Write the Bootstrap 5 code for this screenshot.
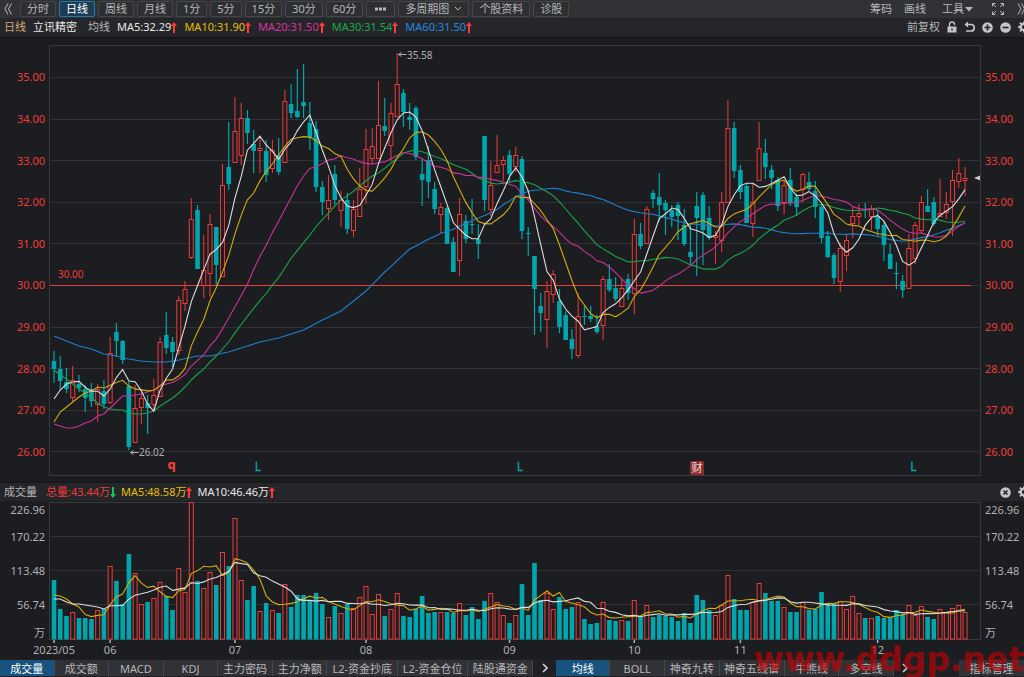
<!DOCTYPE html>
<html lang="zh-CN" data-bs-theme="dark">
<head>
<meta charset="utf-8">
<meta name="viewport" content="width=device-width, initial-scale=1">
<title>立讯精密 日线</title>
<link href="https://cdn.jsdelivr.net/npm/bootstrap@5.3.0/dist/css/bootstrap.min.css" rel="stylesheet">
<style>
  :root { --up:#ee3b39; --down:#00a6ad; --txt:#b6b7ba; --panel:#1c1d20; --bar:#252629; --tool:#313236; }
  body { font-family:"Noto Sans","Noto Sans CJK SC",sans-serif; font-size:11px; line-height:16px; color:var(--txt); background:var(--panel); }
  button, select { font:inherit; color:inherit; }
  .toolbar { background:var(--tool); height:18px; }
  .infobar { background:var(--bar); height:19px; border-bottom:1px solid #202124; }
  .edge { height:2px; background:#18171b; }
  .volbar { background:var(--bar); height:20px; border-top:2px solid #18171b; }
  .tool { height:16px; padding:0 6px; line-height:14px; font-size:11px; color:var(--txt); border:1px solid #45464a; border-radius:2px; background:#2e2f33; }
  .tool.active { background:#1d3d55; border-color:#2277b0; color:#fff; }
  .tool.dots { padding:0 7px; }
  select.tool { width:71px; appearance:none; background:#2e2f33 url("data:image/svg+xml,%3Csvg xmlns='http://www.w3.org/2000/svg' width='8' height='6'%3E%3Cpath d='M1 1l3 3 3-3' fill='none' stroke='%23b6b7ba'/%3E%3C/svg%3E") no-repeat right 6px center; }
  .plain { border:0; background:none; padding:0; line-height:16px; display:flex; align-items:center; }
  .tools { gap:3px; }
  .quotes { gap:7px; }
  .volquotes { gap:5px; }
  .c-day { color:#d9a871; } .c-ma10 { color:#e6bd00; } .c-ma20 { color:#d6309c; } .c-ma30 { color:#15ad4b; } .c-ma60 { color:#1f8be0; } .c-up { color:var(--up); } .c-white { color:#e8e8e8; }
  .plot { flex-basis:0; min-height:0; }
  .plot svg { width:100%; height:100%; display:block; }
  .plot-k { flex-grow:442; } .plot-v { flex-grow:158; }
  .tabs { height:18px; padding:1px 0; background:#1f2023; }
  .tabs button { flex:0 0 5.33%; border:0; border-right:1px solid #46474b; padding:0; background:var(--tool); white-space:nowrap; line-height:15px; }
  .tabs .w-long { flex-basis:6.88%; } .tabs .w-mid { flex-basis:6.35%; }
  .tabs .on { background:#18527f; color:#fff; }
  .tabs .more { flex-basis:2.2%; background:none; border:0; display:flex; align-items:center; justify-content:center; }
  .watermark { right:0; bottom:0; font:bold 33px/34px "DejaVu Sans",sans-serif; color:rgba(200,0,4,.63); pointer-events:none; }
</style>
</head>
<body class="d-flex flex-column vh-100 overflow-hidden position-relative">
<svg class="d-none" aria-hidden="true">
  <symbol id="up" viewBox="0 0 6 11"><path d="M3 0L6 4H4V11H2V4H0z" fill="#ff3a38"/></symbol>
  <symbol id="dn" viewBox="0 0 6 11"><path d="M3 11L6 7H4V0H2V7H0z" fill="#14c455"/></symbol>
  <symbol id="gear" viewBox="0 0 6 12"><path d="M5 .5h2v2H5zM.2 4.800h2v2.400h-2zM1.300 2.300l1.300-1.300 1.600 1.600-1.300 1.300zM1.300 9.700L2.600 11l1.600-1.600-1.300-1.300zM5 9.500h2v2H5z" fill="#c4c5c8"/><circle cx="6" cy="6" r="3.200" fill="none" stroke="#c4c5c8" stroke-width="2.200"/></symbol>
  <symbol id="next" viewBox="0 0 6 10"><path d="M1 1l4 4-4 4" fill="none" stroke="#d0d1d3" stroke-width="1.600"/></symbol>
</svg>

<header class="toolbar d-flex align-items-center">
  <button class="plain ms-1 me-2" aria-label="收起"><svg width="8" height="12" viewBox="0 0 8 12"><path d="M4 .5L1 6l3 5.500M7.500 .5L4.500 6l3 5.500" fill="none" stroke="#b6b7ba"/></svg></button>
  <nav class="tools d-flex" aria-label="周期">
    <button class="tool">分时</button><button class="tool active">日线</button><button class="tool">周线</button><button class="tool">月线</button><button class="tool">1分</button><button class="tool">5分</button><button class="tool">15分</button><button class="tool">30分</button><button class="tool">60分</button>
    <button class="tool dots d-flex align-items-center" aria-label="更多"><svg width="13" height="4"><path d="M1 .5h3v3H1zM5 .5h3v3H5zM9 .5h3v3H9z" fill="#b6b7ba"/></svg></button>
    <select class="tool" aria-label="多周期图"><option>多周期图</option></select>
    <button class="tool">个股资料</button><button class="tool">诊股</button>
  </nav>
  <div class="d-flex align-items-center ms-auto">
    <button class="plain me-2 pe-1">筹码</button><button class="plain me-3">画线</button>
    <button class="plain me-3">工具<svg width="11" height="5"><path d="M1 0h8L5 4.500z" fill="#b6b7ba"/></svg></button>
    <button class="plain" aria-label="全屏"><svg width="14" height="14" viewBox="0 0 14 14" fill="none" stroke="#b6b7ba"><path d="M1.500 4.500v-3h3M1.500 1.500l3.500 3.500M9.500 1.500h3v3M12.500 1.500L9 5M1.500 9.500v3h3M1.500 12.500L5 9M12.500 9.500v3h-3M12.500 12.500L9 9"/></svg></button>
    <button class="plain ms-2 ps-1" aria-label="展开"><svg width="7" height="12" viewBox="0 0 7 12"><path d="M1 .5L4 6l-3 5.500M4.500 .5L7.500 6l-3 5.500" fill="none" stroke="#b6b7ba"/></svg></button>
  </div>
</header>

<div class="infobar d-flex align-items-center">
  <div class="quotes d-flex ps-1">
    <span class="c-day">日线</span><span class="c-white">立讯精密</span><span class="ms-1">均线</span>
    <span class="c-white d-flex align-items-center">MA5:32.29<svg width="6" height="11"><use href="#up"/></svg></span>
    <span class="c-ma10 d-flex align-items-center">MA10:31.90<svg width="6" height="11"><use href="#up"/></svg></span>
    <span class="c-ma20 d-flex align-items-center">MA20:31.50<svg width="6" height="11"><use href="#up"/></svg></span>
    <span class="c-ma30 d-flex align-items-center">MA30:31.54<svg width="6" height="11"><use href="#up"/></svg></span>
    <span class="c-ma60 d-flex align-items-center">MA60:31.50<svg width="6" height="11"><use href="#up"/></svg></span>
  </div>
  <div class="quotes d-flex align-items-center ms-auto">
    <button class="plain">前复权</button>
    <button class="plain" aria-label="锁定"><svg width="10" height="12" viewBox="0 0 10 12"><path d="M2.500 6V3.500a2.500 2.500 0 0 1 5 0V4" fill="none" stroke="#c4c5c8" stroke-width="1.300"/><path d="M.5 5.500h9v6h-9zM4.300 7.500v2h1.400v-2z" fill="#c4c5c8" fill-rule="evenodd"/></svg></button>
    <button class="plain" aria-label="撤销"><svg width="11" height="12" viewBox="0 0 11 12"><path d="M2 3.500h5a3 3 0 0 1 0 6.500H2" fill="none" stroke="#c4c5c8" stroke-width="1.700"/><path d="M4 .5v6L.5 3.500z" fill="#c4c5c8"/></svg></button>
    <button class="plain" aria-label="放大"><svg width="11" height="11" viewBox="0 0 11 11"><circle cx="5.500" cy="5.500" r="5.300" fill="#c4c5c8"/><path d="M5.500 2.500v6M2.500 5.500h6" stroke="#252629" stroke-width="1.700"/></svg></button>
    <button class="plain" aria-label="缩小"><svg width="11" height="11" viewBox="0 0 11 11"><circle cx="5.500" cy="5.500" r="5.300" fill="#c4c5c8"/><path d="M2.500 5.500h6" stroke="#252629" stroke-width="1.700"/></svg></button>
    <button class="plain" aria-label="设置"><svg width="6" height="12"><use href="#gear"/></svg></button>
  </div>
</div>
<div class="edge"></div>

<main class="plot plot-k"><svg id="kline" role="img" aria-label="K线图"></svg></main>

<div class="volbar d-flex align-items-center">
  <div class="volquotes d-flex ps-1">
    <span class="me-1">成交量</span>
    <span class="c-up d-flex align-items-center">总量:43.44万<svg width="6" height="11"><use href="#dn"/></svg></span>
    <span class="c-ma10 d-flex align-items-center">MA5:48.58万<svg width="6" height="11"><use href="#up"/></svg></span>
    <span class="c-white d-flex align-items-center">MA10:46.46万<svg width="6" height="11"><use href="#up"/></svg></span>
  </div>
  <div class="quotes d-flex align-items-center ms-auto">
    <button class="plain" aria-label="关闭"><svg width="11" height="11" viewBox="0 0 11 11"><circle cx="5.500" cy="5.500" r="5.300" fill="#c4c5c8"/><path d="M3.500 3.500l4 4M7.500 3.500l-4 4" stroke="#252629" stroke-width="1.600"/></svg></button>
    <button class="plain" aria-label="设置"><svg width="6" height="12"><use href="#gear"/></svg></button>
  </div>
</div>
<section class="plot plot-v"><svg id="volume" role="img" aria-label="成交量图"></svg></section>

<footer class="tabs d-flex">
  <button class="on">成交量</button><button>成交额</button><button>MACD</button><button>KDJ</button><button>主力密码</button><button>主力净额</button><button class="w-long">L2-资金抄底</button><button class="w-long">L2-资金仓位</button><button class="w-mid">陆股通资金</button>
  <button class="more" aria-label="更多副图"><svg width="6" height="10"><use href="#next"/></svg></button>
  <button class="on">均线</button><button>BOLL</button><button>神奇九转</button><button class="w-mid">神奇五线谱</button><button>牛熊线</button><button>多空线</button>
  <button class="more" aria-label="更多主图"><svg width="6" height="10"><use href="#next"/></svg></button>
  <button class="w-mid ms-auto border-0">指标管理</button>
</footer>
<div class="watermark position-absolute">www.ddgp.net</div>

<script src="https://cdn.jsdelivr.net/npm/bootstrap@5.3.0/dist/js/bootstrap.bundle.min.js"></script>
<script>
// Each day: high, body top, body bottom, low on the panel scale (77.4 = 35.00, 41.6 per yuan); r = rise, t = fall.
const days = `351 361 369 383 t|356 369 381 389 t|368 382 389 393 t|366 380 398 402 r|375 384 388 392 t|385 389 398 412 t|383 389 401 407 t|384 389 405 422 r|380 391 404 409 t|337 353 403 404 r
323 332 341 357 t|340 341 360 364 t|382 386 447 450 t|385 408 443 443 r|389 398 408 424 r|395 403 408 434 t|379 395 405 411 r|337 342 397 397 r|312 335 348 354 t|337 342 352 367 t
296 300 351 355 r|281 289 304 311 r|198 219 258 259 r|205 210 269 269 t|235 270 286 298 r|214 224 274 297 r|227 227 265 286 t|164 185 277 277 r|122 167 184 190 t|97 131 163 163 r
103 118 156 165 r|110 118 133 144 t|130 144 151 173 t|137 148 151 173 r|140 151 175 182 t|140 150 169 173 r|138 155 172 175 t|90 101 163 163 r|84 104 113 118 t|69 111 117 118 t
64 102 106 118 t|102 123 138 150 t|121 129 187 192 t|181 187 202 215 t|175 200 209 220 r|165 174 200 205 t|191 200 211 227 r|193 200 229 234 t|200 209 231 237 r|168 189 217 217 r
129 149 187 204 r|128 146 159 164 r|81 125 159 159 r|98 126 131 136 t|103 113 146 161 r|53 84 117 117 r|89 93 112 127 t|103 117 120 130 t|106 108 157 160 t|159 174 180 206 t
146 160 182 198 t|182 189 209 214 t|203 207 215 233 r|206 208 244 244 t|237 242 272 272 t|198 214 261 276 r|215 221 239 243 t|199 224 225 234 t|224 239 244 259 t|136 136 200 211 t
161 185 210 216 r|135 165 173 173 r|156 160 165 181 r|150 155 174 181 t|147 155 167 172 r|156 159 231 239 t|227 233 234 256 t|256 256 289 335 t|293 306 313 332 t|281 291 320 348 r
270 274 295 303 r|289 301 327 333 t|311 315 340 340 t|329 339 349 359 t|293 316 356 358 r|306 316 317 325 t|306 316 319 322 t|315 326 332 334 t|276 279 326 340 r|264 279 290 292 t
277 288 299 301 t|279 288 307 307 r|274 279 293 300 t|219 234 294 314 r|223 234 246 249 t|206 209 244 244 r|190 193 199 208 t|173 197 205 221 t|200 203 210 235 t|205 210 217 227 t
202 205 216 240 t|209 225 244 246 t|225 252 257 264 t|192 206 218 276 t|192 195 230 265 t|206 218 238 240 t|231 235 238 264 r|192 202 241 252 r|100 128 203 203 r|122 128 171 178 t
165 170 192 199 t|184 186 223 223 t|183 202 224 237 r|122 148 181 181 r|139 153 167 179 t|165 170 178 189 t|177 180 206 211 t|180 185 203 214 r|168 180 203 206 t|194 197 207 216 t
173 174 190 202 r|172 182 189 191 t|181 191 207 218 t|204 207 238 243 t|231 236 257 258 t|253 255 278 284 t|243 248 282 292 r|234 240 256 271 r|206 216 224 238 r|204 213 217 225 r
203 209 210 218 t|205 209 217 230 r|210 216 229 237 t|222 225 245 261 t|244 254 269 269 t|262 273 274 289 t|275 281 290 298 t|234 248 289 289 r|222 225 259 264 r|196 202 231 233 r
189 206 212 212 t|197 202 224 226 t|179 213 217 217 r|192 204 213 219 r|170 180 202 236 r|158 173 182 188 r|167 178 181 196 r`
  .split(/[|\n]/).map(s => { const p = s.trim().split(' '); return { hi:+p[0], top:+p[1], bot:+p[2], lo:+p[3], rise:p[4] === 'r' }; });

// Top of each day's volume bar; the zero line is at 639.
const vols = `580 609 616 612 618 618 619 610 609 566 581 604 554 573 604 602 598 582 596 610 568 592 502 581 588 572 585 552 566 518 580 600 586 611 603 610 613 584 607 595 595 600 593 604 617 606 613 604 608 597 586 614 594 616 609 593 616 617 609 596 613 612 612 612 613 603 615 607 619 601 593 602 615 623 615 584 615 563 600 593 609 597 609 607 602 619 624 623 602 620 621 620 621 600 617 605 617 615 616 617 621 613 623 595 600 610 615 605 575 599 610 610 602 583 593 601 601 607 612 612 602 610 609 592 603 604 601 609 596 613 618 618 616 618 617 610 614 605 615 606 617 619 609 612 608 605 612`.split(' ').map(Number);

// Averages for the first days, whose earlier closes are not on screen.
const seed5 = [399,390,384,382];
const seed10 = [422,412,407,402,397,393,391,387,388];
const seed20 = [424,426,428,428,426,423,421,416,414,408,402,396,396,395,394,392,390,386,384];
const seed30 = [370,375,379,384,389,393,398,403,407,409,410,410,413,414,414,413,411,406,402,398,393,387,380,374,369,362,356,349,342];
const seed60 = fill([[0,336],[2,341],[4,346],[6,349],[8,354],[10,356],[12,359],[14,361],[16,362],[18,362],[20,360],[23,356],[25,356],[28,352],[31,346],[33,342],[36,338],[40,330],[43,320],[46,311],[50,291],[53,272],[57,249],[58,246]]);

function fill(k) {
  const out = [];
  for (let n = 1; n < k.length; n++) for (let i = k[n-1][0]; i < k[n][0]; i++)
    out.push(k[n-1][1] + (k[n][1] - k[n-1][1]) * (i - k[n-1][0]) / (k[n][0] - k[n-1][0]));
  out.push(k[k.length-1][1]);
  return out;
}
const average = (v, n, seed) => v.map((_, i) => i < seed.length ? seed[i] : v.slice(i - n + 1, i + 1).reduce((a, b) => a + b, 0) / n);

function draw() {
  const W = document.body.clientWidth;
  const right = W - 44;
  const X = p => 50 + (p - 50) * (right - 50) / 930;
  const day = i => X(54 + 6.24 * i);
  const bw = 4.6 * (right - 50) / 930;
  const text = (x, y, s, fill, extra = '') => `<text x="${x}" y="${y}" fill="${fill}" font-size="11" ${extra}>${s}</text>`;
  const line = (x1, y1, x2, y2, c) => `<path d="M${x1} ${y1}L${x2} ${y2}" stroke="${c}" shape-rendering="crispEdges"/>`;
  const curve = (v, Y, c) => `<polyline points="${v.map((y, i) => day(i).toFixed(1) + ',' + Y(y).toFixed(1)).join(' ')}" fill="none" stroke="${c}" stroke-width="1.1"/>`;
  const up = '#ee3b39', down = '#00a6ad', grid = '#303134', frame = '#38393c', grey = '#b0b1b4';

  // price panel
  const k = document.getElementById('kline'), kh = k.parentNode.clientHeight;
  const Y = y => (y - 39) * kh / 442, G = y => Math.round(Y(y)) + .5;
  let s = `<rect x="49.5" y="${G(45)}" width="${right - 49}" height="${G(475) - G(45)}" fill="none" stroke="${frame}"/>`;
  for (let p = 35; p >= 26; p--) {
    const y = 77.4 + (35 - p) * 41.6;
    s += line(50, G(y - .4), right, G(y - .4), grid);
    s += text(45, Y(y) + 4, p + '.00', up, 'text-anchor="end"') + text(right + 5, Y(y) + 4, p + '.00', up);
  }
  s += line(50, G(285), right - 9, G(285), '#f03c3a') ;
  days.forEach((d, i) => {
    const x = day(i), t = Y(d.top), b = Y(d.bot);
    if (d.rise) s += `<path d="M${x} ${Y(d.hi)}V${t}M${x} ${b}V${Y(d.lo)}" stroke="${up}"/><rect x="${x - bw/2 + .3}" y="${t + .5}" width="${bw - .6}" height="${Math.max(b - t - 1, 1)}" fill="#1c1d20" stroke="${up}"/>`;
    else s += `<path d="M${x} ${Y(d.hi)}V${Y(d.lo)}" stroke="${down}" stroke-width="1.2"/><rect x="${x - bw/2}" y="${t}" width="${bw}" height="${Math.max(b - t, 1)}" fill="${down}"/>`;
  });
  const close = days.map(d => d.rise ? d.top : d.bot);
  s += curve(average(close, 60, seed60), Y, '#1d80cf') + curve(average(close, 30, seed30), Y, '#18a449') + curve(average(close, 20, seed20), Y, '#c9329a') + curve(average(close, 10, seed10), Y, '#d3ad08') + curve(average(close, 5, seed5), Y, '#dedede');
  s += text(58, Y(278), '30.00', up, 'style="font-size:10px"');
  const arrow = (x, y) => `<path d="M${x + 8} ${y}H${x}M${x + 3} ${y - 2}L${x} ${y}L${x + 3} ${y + 2}" fill="none" stroke="${grey}"/>`;
  s += arrow(X(398.5), G(54)) + text(X(407), Y(59), '35.58', grey, 'style="font-size:10px"');
  s += arrow(X(130.5), G(452)) + text(X(139), Y(456), '26.02', grey, 'style="font-size:10px"');
  s += text(X(171.5), Y(469), 'q', '#ff3d3b', 'text-anchor="middle" font-weight="bold" style="font-size:13px"');
  [258, 520, 913.5].forEach(x => s += text(X(x), Y(471), 'L', down, 'text-anchor="middle" stroke="#00a6ad" stroke-width=".3" style="font-size:12px"'));
  s += `<rect x="${X(690)}" y="${Y(461)}" width="14" height="14" rx="1" fill="#8c2b2b"/>` + text(X(697), Y(472), '财', '#f0dcdc', 'text-anchor="middle"');
  s += `<path d="M${right - 6} ${Y(178)}l6-2.500v5z" fill="#c8c9cb"/>`;
  k.innerHTML = s;

  // volume panel
  const v = document.getElementById('volume'), vh = v.parentNode.clientHeight;
  const V = y => (y - 501) * vh / 158, H = y => Math.round(V(y)) + .5;
  s = `<rect x="49.5" y="${H(502)}" width="${right - 49}" height="${H(639) - H(502)}" fill="none" stroke="${frame}"/>`;
  [[509.5, '226.96'], [536.5, '170.22'], [570.5, '113.48'], [604.5, '56.74']].forEach(([y, t], n) => {
    if (n) s += line(50, H(y - .5), right, H(y - .5), grid);
    s += text(45, V(y) + 4, t, grey, 'text-anchor="end"') + text(right + 5, V(y) + 4, t, grey);
  });
  s += text(45, V(637), '万', grey, 'text-anchor="end"') + text(right + 5, V(637), '万', grey);
  vols.forEach((y, i) => {
    const x = day(i), t = V(y), b = V(639.5);
    s += days[i].rise ? `<rect x="${x - bw/2 + .3}" y="${t + .5}" width="${bw - .6}" height="${b - t - 1}" fill="#1c1d20" stroke="${up}"/>` : `<rect x="${x - bw/2}" y="${t}" width="${bw}" height="${b - t}" fill="${down}"/>`;
  });
  s += curve(average(vols, 5, [595,596,599,604]), V, '#d3ad08') + curve(average(vols, 10, [599,599,602,604,604,605,606,607,609]), V, '#dedede');
  [[0, '2023/05'], [9, '06'], [29, '07'], [50, '08'], [73, '09'], [93, '10'], [110, '11'], [132, '12']].forEach(([i, t]) => {
    s += `<path d="M${day(i)} ${V(640)}v3" stroke="${grey}" stroke-width="1.5"/>` + text(day(i), V(654), t, grey, 'text-anchor="middle"');
  });
  v.innerHTML = s;
}
draw();
addEventListener('resize', draw);
</script>
</body>
</html>
